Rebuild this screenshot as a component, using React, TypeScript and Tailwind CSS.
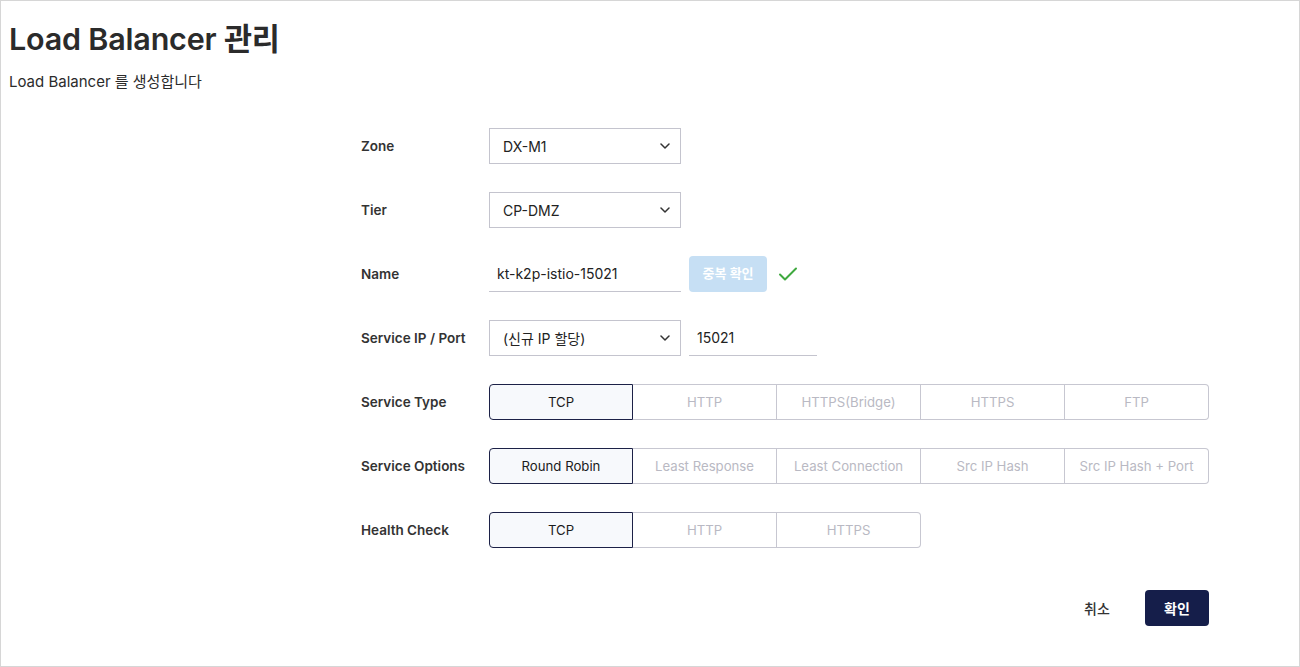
import React from "react";

const font = { fontFamily: 'Inter, "Noto Sans CJK KR", sans-serif' };

function Chevron() {
  return (
    <svg width="10" height="6" viewBox="0 0 10 6" fill="none" className="shrink-0">
      <path d="M1 1l4 4 4-4" stroke="#333" strokeWidth="1.5" strokeLinecap="round" strokeLinejoin="round" />
    </svg>
  );
}

function Select({ value, w }: { value: string; w: string }) {
  return (
    <div className={`${w} h-9 border border-[#c4c4ce] bg-white flex items-center justify-between pl-[13px] pr-[10px] text-[14px] text-[#222]`}>
      <span>{value}</span>
      <Chevron />
    </div>
  );
}

function Row({ label, children }: { label: string; children: React.ReactNode }) {
  return (
    <div className="flex items-center h-9">
      <div className="w-[128px] shrink-0 text-[13.5px] font-semibold text-[#333]">{label}</div>
      <div className="flex items-center">{children}</div>
    </div>
  );
}

function Segments({ items, sel = 0 }: { items: string[]; sel?: number }) {
  return (
    <div className="flex">
      {items.map((it, i) => {
        const first = i === 0;
        const last = i === items.length - 1;
        const selected = i === sel;
        return (
          <div
            key={it}
            className={[
              "h-9 w-[144px] pt-[2px] flex items-center justify-center text-[13.2px] border",
              first ? "rounded-l-[4px]" : "border-l-0",
              last ? "rounded-r-[4px]" : "",
              selected
                ? "border-[#1c2147] bg-[#f7f9fc] text-[#1b1b1b]"
                : "border-[#c7c7d1] bg-white text-[#b9b9c3]",
            ].join(" ")}
          >
            {it}
          </div>
        );
      })}
    </div>
  );
}

export default function App() {
  return (
    <div style={font} className="w-[1300px] h-[667px] bg-white border border-[#d6d6d6] box-border overflow-hidden">
      <div className="pl-[8px] pt-[18px]">
        <h1 className="text-[30.5px] leading-[40px] font-semibold text-[#2b2b2b] tracking-[-0.2px]">Load Balancer 관리</h1>
        <p className="mt-[13px] text-[15px] leading-[20px] text-[#2b2b2b]">Load Balancer 를 생성합니다</p>
      </div>
      <div className="pl-[360px] pt-[36px] w-[1208px] box-content">
        <div className="flex flex-col gap-[28px]">
          <Row label="Zone">
            <Select value="DX-M1" w="w-[192px]" />
          </Row>
          <Row label="Tier">
            <Select value="CP-DMZ" w="w-[192px]" />
          </Row>
          <Row label="Name">
            <div className="w-[192px] h-9 border-b border-[#c4c4ce] flex items-center pl-2 text-[14px] text-[#222]">kt-k2p-istio-15021</div>
            <div className="ml-[8px] w-[78px] h-9 rounded-[4px] bg-[#c6dff4] text-white text-[13px] font-semibold flex items-center justify-center">중복 확인</div>
            <svg width="20" height="16" viewBox="0 0 20 16" className="ml-[11px]">
              <path d="M2 8.5l5 5L18 2.5" stroke="#3fa93f" strokeWidth="2" fill="none" strokeLinecap="round" strokeLinejoin="round" />
            </svg>
          </Row>
          <Row label="Service IP / Port">
            <Select value="(신규 IP 할당)" w="w-[192px]" />
            <div className="ml-[8px] w-[128px] h-9 border-b border-[#c4c4ce] flex items-center pl-2 text-[14px] text-[#222]">15021</div>
          </Row>
          <Row label="Service Type">
            <Segments items={["TCP", "HTTP", "HTTPS(Bridge)", "HTTPS", "FTP"]} />
          </Row>
          <Row label="Service Options">
            <Segments items={["Round Robin", "Least Response", "Least Connection", "Src IP Hash", "Src IP Hash + Port"]} />
          </Row>
          <Row label="Health Check">
            <Segments items={["TCP", "HTTP", "HTTPS"]} />
          </Row>
        </div>
        <div className="flex justify-end items-center mt-[42px] gap-[16px] w-[848px]">
          <div className="w-[64px] h-9 flex items-center justify-center text-[14px] text-[#333] font-medium">취소</div>
          <div className="w-[64px] h-9 rounded-[4px] bg-[#151e4a] text-white text-[14px] font-semibold flex items-center justify-center">확인</div>
        </div>
      </div>
    </div>
  );
}
